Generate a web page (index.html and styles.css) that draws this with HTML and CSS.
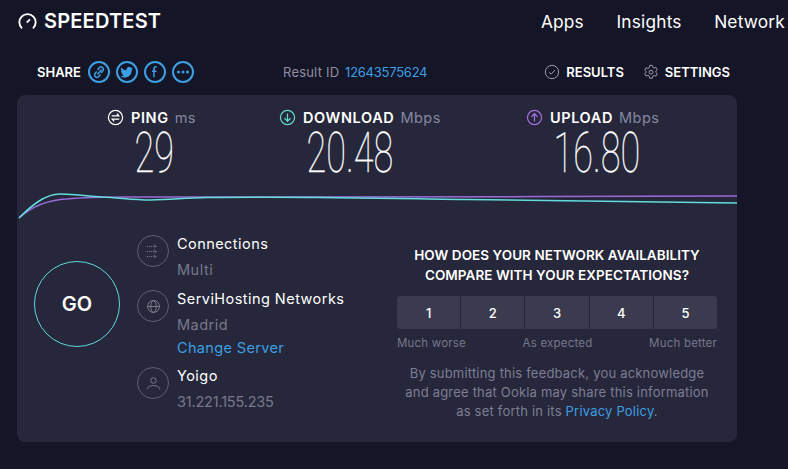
FILE: index.html
```html
<!DOCTYPE html>
<html lang="en">
<head>
<meta charset="utf-8">
<title>Speedtest</title>
<link rel="stylesheet" href="styles.css">
</head>
<body>
<header class="topbar">
  <div class="logo">
    <svg class="logo-icon" viewBox="0 0 20 20"><path d="M4.2 17.2A8.6 8.6 0 1 1 15.8 17.2"/><path d="M9.2 11.2L12.6 7.8"/></svg>
    <span class="logo-text">SPEEDTEST</span>
  </div>
  <nav class="nav"><span>Apps</span><span>Insights</span><span>Network</span></nav>
</header>
<section class="toolbar">
  <div class="share">
    <span class="share-label">SHARE</span>
    <span class="share-btn"><svg viewBox="2 2 18 18"><path d="M9.500 13.500l4-5M8.700 10.500l-1.700 2.200a2.400 2.400 0 0 0 3.800 2.900l1.700-2.200M13.300 12l1.700-2.400a2.400 2.400 0 0 0-3.800-2.900L9.500 9"/></svg></span>
    <span class="share-btn"><svg viewBox="2 2 18 18"><path class="solid" d="M17 7.300c-.5.2-1 .4-1.500.4.5-.3 1-.8 1.200-1.400-.5.3-1.100.5-1.700.6a2.600 2.600 0 0 0-4.500 2.400C8.300 9.200 6.400 8.200 5.200 6.600c-.7 1.200-.3 2.700.8 3.500-.4 0-.8-.1-1.200-.3 0 1.300.9 2.400 2.100 2.600-.4.1-.8.1-1.200 0 .3 1.100 1.300 1.800 2.400 1.800-1.100.9-2.400 1.200-3.800 1.100 4.900 3 11.800.2 11.500-6.900.6-.4 1-.8 1.400-1.400z"/></svg></span>
    <span class="share-btn"><svg viewBox="2 2 18 18"><path d="M12.800 5.800h-.9c-1.200 0-1.900.8-1.900 2v8.400M8 10.200h4.500"/></svg></span>
    <span class="share-btn"><svg viewBox="2 2 18 18"><circle class="solid" cx="6.500" cy="11" r="1.500"/><circle class="solid" cx="11" cy="11" r="1.500"/><circle class="solid" cx="15.500" cy="11" r="1.500"/></svg></span>
  </div>
  <div class="result-id">Result ID <a class="link result-num">12643575624</a></div>
  <div class="actions">
    <span class="action"><svg viewBox="0 0 18 18"><circle cx="9" cy="9" r="7.500"/><path d="M5.800 9.300l2.200 2.200 4.300-4.700"/></svg>RESULTS</span>
    <span class="action"><svg viewBox="0 0 18 18"><path d="M7.500 1.500h3l.5 2.200 1.500.8 2.100-.7 1.500 2.600-1.600 1.500v1.600l1.600 1.500-1.500 2.600-2.100-.7-1.500.8-.5 2.300h-3l-.5-2.300-1.500-.8-2.100.7-1.500-2.600 1.600-1.500V8.400L1.900 6.900l1.500-2.600 2.100.7L7 4.200z"/><circle cx="9" cy="9.200" r="2.200"/></svg>SETTINGS</span>
  </div>
</section>
<main class="panel">
  <div class="stats">
    <div class="stat stat-ping">
      <div class="stat-head"><svg class="stat-icon" viewBox="0 0 18 18"><circle cx="9" cy="9" r="7.500"/><path d="M5 7.300h7.500L10.500 5M13 10.700H5.500L7.500 13"/></svg><b>PING</b><span class="unit">ms</span></div>
      <div class="stat-value">29</div>
    </div>
    <div class="stat stat-down">
      <div class="stat-head"><svg class="stat-icon icon-cyan" viewBox="0 0 18 18"><circle cx="9" cy="9" r="7.500"/><path d="M9 4.800v8M5.800 9.800L9 13l3.200-3.200"/></svg><b>DOWNLOAD</b><span class="unit">Mbps</span></div>
      <div class="stat-value">20.48</div>
    </div>
    <div class="stat stat-up">
      <div class="stat-head"><svg class="stat-icon icon-purple" viewBox="0 0 18 18"><circle cx="9" cy="9" r="7.500"/><path d="M9 13.200v-8M5.800 8.200L9 5l3.200 3.200"/></svg><b>UPLOAD</b><span class="unit">Mbps</span></div>
      <div class="stat-value">16.80</div>
    </div>
  </div>
  <svg class="chart" viewBox="0 0 720 36" preserveAspectRatio="none">
    <path class="line-purple" d="M2 32C14 21 30 14 50 13C70 11 85 11 110 11C200 11 500 11 720 10"/>
    <path class="line-cyan" d="M2 32C14 20 28 8 43 8C58 8 70 10 85 11C105 12 115 14 133 14C155 14 165 12 190 11.500C300 10 400 13 450 13.500C550 14 650 16 720 17"/>
  </svg>
  <div class="lower">
    <div class="go-wrap"><button class="go">GO</button></div>
    <div class="details">
      <div class="detail detail-conn">
        <span class="detail-icon"><svg viewBox="0 0 20 20"><path d="M2 4h11M10.500 2l3 2-3 2M2 10h11M10.500 8l3 2-3 2M2 16h11M10.500 14l3 2-3 2" stroke-dasharray="1.500 1"/></svg></span>
        <div class="detail-text"><div class="detail-title">Connections</div><div class="detail-sub">Multi</div></div>
      </div>
      <div class="detail detail-server">
        <span class="detail-icon"><svg viewBox="0 0 20 20"><circle cx="10" cy="10" r="7"/><ellipse cx="10" cy="10" rx="3.200" ry="7"/><path d="M3 10h14"/></svg></span>
        <div class="detail-text"><div class="detail-title">ServiHosting Networks</div><div class="detail-sub">Madrid</div><a class="link detail-link">Change Server</a></div>
      </div>
      <div class="detail">
        <span class="detail-icon"><svg viewBox="0 0 20 20"><circle cx="10" cy="6.500" r="3.200"/><path d="M2.800 17c0-3 3-4.500 7.200-4.500s7.200 1.500 7.200 4.500"/></svg></span>
        <div class="detail-text"><div class="detail-title">Yoigo</div><div class="detail-sub detail-ip">31.221.155.235</div></div>
      </div>
    </div>
    <div class="feedback">
      <h2 class="question">HOW DOES YOUR NETWORK AVAILABILITY<br>COMPARE WITH YOUR EXPECTATIONS?</h2>
      <div class="scale"><span>1</span><span>2</span><span>3</span><span>4</span><span>5</span></div>
      <div class="scale-labels"><span>Much worse</span><span>As expected</span><span>Much better</span></div>
      <p class="legal">By submitting this feedback, you acknowledge<br>and agree that Ookla may share this information<br>as set forth in its <a class="link">Privacy Policy</a>.</p>
    </div>
  </div>
</main>
</body>
</html>
```
FILE: styles.css
```css
* { box-sizing: border-box; }
html, body { margin: 0; height: 100%; }
body {
  width: 788px; height: 469px; overflow: hidden;
  background: #141526; color: #fff;
  font-family: Inter, "Noto Sans", sans-serif;
}
svg { fill: none; stroke: currentColor; display: block; }
.solid { fill: currentColor; stroke: none; }
.link { color: #3d9fe3; }

.topbar { display: flex; justify-content: space-between; align-items: center; height: 42px; padding: 0 3px 0 18px; }
.logo { display: flex; align-items: center; gap: 7px; }
.logo-icon { width: 19px; height: 19px; stroke-width: 2; }
.logo-text { font-size: 20px; font-weight: 600; letter-spacing: .2px; }
.nav { display: flex; gap: 32.500px; font-size: 17.300px; letter-spacing: .2px; }

.toolbar { display: grid; grid-template-columns: 246px 1fr auto; align-items: center; height: 53px; padding: 7px 58px 0 37px; }
.share { display: flex; align-items: center; gap: 6px; }
.share-label { font-size: 13px; font-weight: 600; margin-right: 1px; }
.share-btn { width: 22px; height: 22px; border: 2px solid #3d9fe3; border-radius: 50%; color: #3d9fe3; }
.share-btn svg { width: 18px; height: 18px; stroke-width: 1.500; }
.result-id { font-size: 13px; color: #8e8fa3; letter-spacing: .2px; }
.result-num { margin-left: 2px; letter-spacing: -.25px; }
.actions { display: flex; gap: 19px; }
.action { display: flex; align-items: center; gap: 6px; font-size: 13px; font-weight: 600; }
.action svg { width: 16px; height: 16px; color: #a9aab8; stroke-width: 1; }

.panel { margin-left: 17px; width: 720px; height: 347px; background: #26273a; border-radius: 8px; }
.stats { display: grid; grid-template-columns: 172px 247px 1fr; height: 91px; padding: 12px 0 0 90px; }
.stat-head { display: flex; align-items: center; height: 20px; font-size: 14.500px; }
.stat-head b { font-weight: 600; letter-spacing: .6px; }
.stat-icon { width: 17px; height: 17px; margin-right: 7px; stroke-width: 1.300; flex: none; }
.icon-cyan { color: #5fdccb; }
.icon-purple { color: #a66fe0; }
.unit { color: #8587a0; margin-left: 6px; letter-spacing: .5px; }
.stat-value { font-family: Roboto, sans-serif; font-weight: 100; font-size: 55px; line-height: 48px; margin-top: 2px; transform: scaleX(.655); transform-origin: left top; -webkit-text-stroke: .3px #fff; padding-left: 42px; }

.chart { width: 720px; height: 36px; stroke-width: 1.500; }
.line-purple { stroke: #9a6bd8; }
.line-cyan { stroke: #62dcdc; }

.lower { display: grid; grid-template-columns: 120px 260px 1fr; height: 220px; }
.go-wrap { padding: 39px 0 0 17px; }
.go { width: 86px; height: 86px; border: 1px solid #5fd9d9; border-radius: 50%; background: transparent; color: #fff; font: 600 20px Inter, sans-serif; padding: 0; }
.details { padding-top: 12px; font-size: 14.500px; letter-spacing: .2px; }
.detail { display: flex; gap: 8px; }
.detail-conn { height: 55px; }
.detail-server { height: 77px; }
.detail-icon { width: 32px; height: 32px; border: 1px solid #5e5f72; border-radius: 50%; color: #8f90a2; display: flex; align-items: center; justify-content: center; flex: none; margin-top: 1px; }
.detail-icon svg { width: 17px; height: 17px; stroke-width: .9; }
.detail-title { line-height: 20px; letter-spacing: .45px; }
.detail-sub { color: #77788c; line-height: 20px; margin-top: 5.500px; letter-spacing: .5px; }
.detail-ip { letter-spacing: -.2px; }
.detail-link { display: block; line-height: 20px; margin-top: 3px; letter-spacing: .35px; }

.feedback { padding: 23px 20px 0 0; text-align: center; }
.question { margin: 0; font-size: 13.500px; font-weight: 600; line-height: 20px; letter-spacing: .05px; }
.scale { display: grid; grid-template-columns: repeat(5, 1fr); gap: 1px; height: 33px; margin-top: 11px; border-radius: 3px; overflow: hidden; }
.scale span { background: #3a3b4f; display: flex; align-items: center; justify-content: center; font-size: 13px; font-weight: 500; }
.scale-labels { display: flex; justify-content: space-between; margin-top: 6px; color: #77788c; font-size: 11.500px; line-height: 16px; letter-spacing: .2px; }
.legal { margin: 13px 0 0; color: #7d7e93; font-size: 13px; line-height: 19px; letter-spacing: .2px; }
```
